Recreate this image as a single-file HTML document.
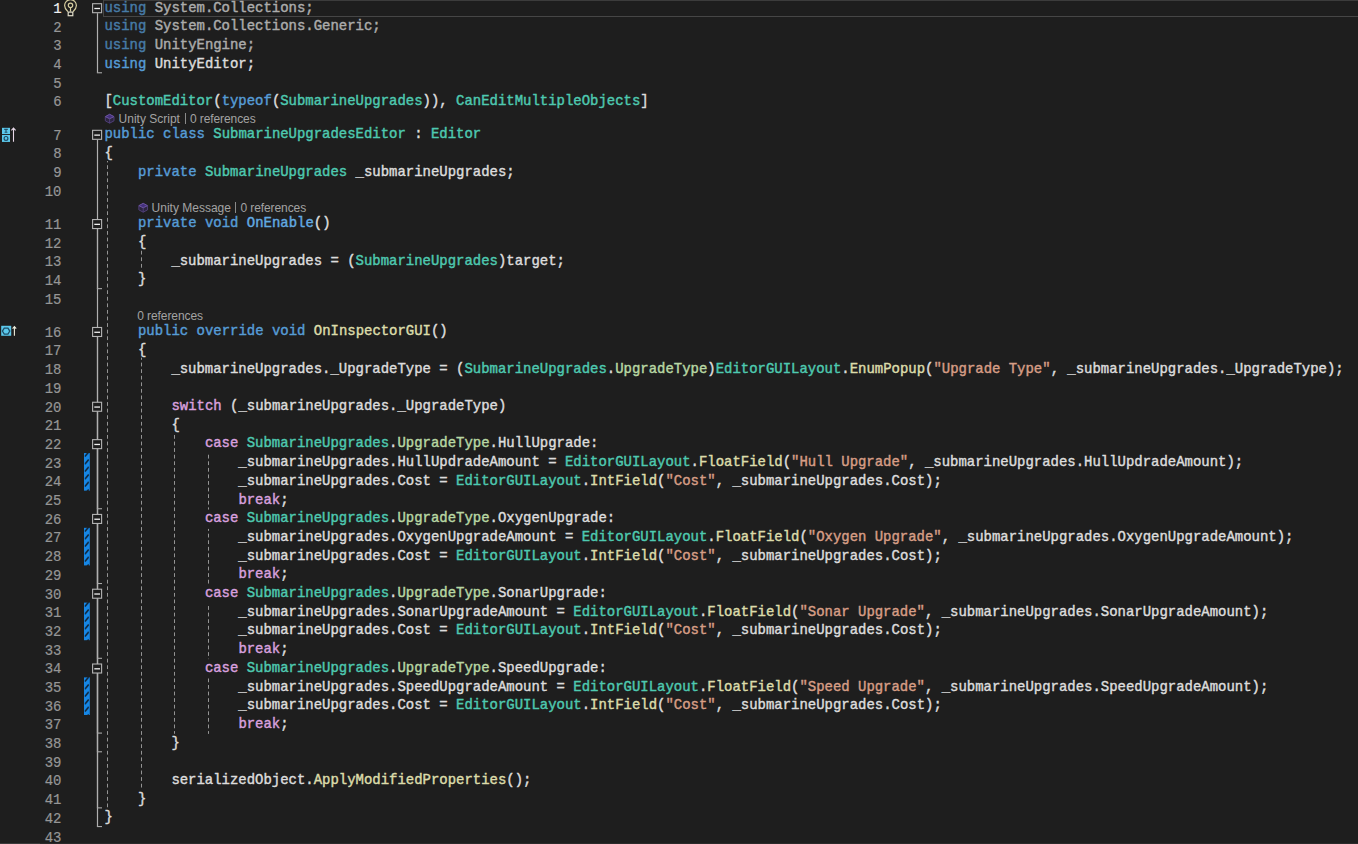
<!DOCTYPE html>
<html><head><meta charset="utf-8"><style>
html,body{margin:0;padding:0;}
body{width:1358px;height:844px;overflow:hidden;background:#1e1e1e;position:relative;}
.ln,.cd{position:absolute;font-family:"Liberation Mono",monospace;font-size:13.965px;line-height:18.70px;height:18.70px;white-space:pre;}
.ln{left:0;width:61.5px;text-align:right;color:#969696;-webkit-text-stroke:0.2px currentColor;}
.cd{left:104.40px;color:#dcdcdc;-webkit-text-stroke:0.42px currentColor;}
i{font-style:normal;}
.k{color:#569cd6}.t{color:#4ec9b0}.m{color:#dcdcaa}.s{color:#d69d85}.c{color:#d8a0df}.e{color:#b8d7a3}.u{color:#62aae2}.dim{opacity:0.74}
.lens{position:absolute;font-family:"Liberation Sans",sans-serif;font-size:12px;color:#a3a3a3;white-space:pre;line-height:14px;}
.abs{position:absolute;}
svg{position:absolute;left:0;top:0;}
</style></head><body>

<div class="abs" style="left:103px;top:0px;width:1255px;height:1px;background:#3c3c3c"></div>
<div class="abs" style="left:103px;top:16px;width:1255px;height:1px;background:#464646"></div>
<div class="abs" style="left:103px;top:0px;width:1px;height:17px;background:#464646"></div>
<div class="abs" style="left:0;top:843px;width:40px;height:1px;background:#3a3a3a"></div>
<div class="abs" style="left:40px;top:843px;width:1318px;height:1px;background:#2a2a2a"></div>
<svg width="1358" height="844" viewBox="0 0 1358 844">
<line x1="107.50" y1="161.01" x2="107.50" y2="808.57" stroke="#949494" stroke-width="1" stroke-dasharray="3.80 2.78" stroke-dashoffset="2.39"/>
<line x1="141.50" y1="249.74" x2="141.50" y2="270.64" stroke="#949494" stroke-width="1" stroke-dasharray="3.80 2.78" stroke-dashoffset="5.58"/>
<line x1="141.50" y1="357.67" x2="141.50" y2="789.88" stroke="#949494" stroke-width="1" stroke-dasharray="3.80 2.78" stroke-dashoffset="1.65"/>
<line x1="174.50" y1="432.45" x2="174.50" y2="733.79" stroke="#949494" stroke-width="1" stroke-dasharray="3.80 2.78" stroke-dashoffset="4.05"/>
<line x1="208.50" y1="454.15" x2="208.50" y2="509.54" stroke="#949494" stroke-width="1" stroke-dasharray="3.80 2.78" stroke-dashoffset="6.01"/>
<line x1="208.50" y1="528.93" x2="208.50" y2="584.32" stroke="#949494" stroke-width="1" stroke-dasharray="3.80 2.78" stroke-dashoffset="1.83"/>
<line x1="208.50" y1="603.72" x2="208.50" y2="659.11" stroke="#949494" stroke-width="1" stroke-dasharray="3.80 2.78" stroke-dashoffset="4.24"/>
<line x1="208.50" y1="678.50" x2="208.50" y2="733.89" stroke="#949494" stroke-width="1" stroke-dasharray="3.80 2.78" stroke-dashoffset="0.06"/>
<line x1="97.50" y1="13.20" x2="97.50" y2="72.78" stroke="#b0b0b0" stroke-width="1.2"/>
<line x1="96.90" y1="72.78" x2="102" y2="72.78" stroke="#a8a8a8" stroke-width="1.1"/>
<line x1="97.50" y1="139.82" x2="97.50" y2="826.57" stroke="#b0b0b0" stroke-width="1.2"/>
<line x1="96.90" y1="826.57" x2="102" y2="826.57" stroke="#a8a8a8" stroke-width="1.1"/>
<line x1="97.50" y1="229.05" x2="97.50" y2="288.64" stroke="#b0b0b0" stroke-width="1.2"/>
<line x1="96.90" y1="288.64" x2="102" y2="288.64" stroke="#a8a8a8" stroke-width="1.1"/>
<line x1="97.50" y1="336.98" x2="97.50" y2="807.87" stroke="#b0b0b0" stroke-width="1.2"/>
<line x1="96.90" y1="807.87" x2="102" y2="807.87" stroke="#a8a8a8" stroke-width="1.1"/>
<line x1="97.50" y1="411.76" x2="97.50" y2="751.79" stroke="#b0b0b0" stroke-width="1.2"/>
<line x1="96.90" y1="751.79" x2="102" y2="751.79" stroke="#a8a8a8" stroke-width="1.1"/>
<line x1="97.50" y1="449.15" x2="97.50" y2="508.74" stroke="#b0b0b0" stroke-width="1.2"/>
<line x1="96.90" y1="508.74" x2="102" y2="508.74" stroke="#a8a8a8" stroke-width="1.1"/>
<line x1="97.50" y1="523.94" x2="97.50" y2="583.52" stroke="#b0b0b0" stroke-width="1.2"/>
<line x1="96.90" y1="583.52" x2="102" y2="583.52" stroke="#a8a8a8" stroke-width="1.1"/>
<line x1="97.50" y1="598.72" x2="97.50" y2="658.31" stroke="#b0b0b0" stroke-width="1.2"/>
<line x1="96.90" y1="658.31" x2="102" y2="658.31" stroke="#a8a8a8" stroke-width="1.1"/>
<line x1="97.50" y1="673.51" x2="97.50" y2="733.09" stroke="#b0b0b0" stroke-width="1.2"/>
<line x1="96.90" y1="733.09" x2="102" y2="733.09" stroke="#a8a8a8" stroke-width="1.1"/>
<rect x="92.6" y="3.70" width="9" height="9" fill="#1e1e1e" stroke="#b4b4b4" stroke-width="1.1"/>
<line x1="94.3" y1="8.50" x2="100.0" y2="8.50" stroke="#f0f0f0" stroke-width="1.3"/>
<rect x="92.6" y="130.32" width="9" height="9" fill="#1e1e1e" stroke="#b4b4b4" stroke-width="1.1"/>
<line x1="94.3" y1="135.12" x2="100.0" y2="135.12" stroke="#f0f0f0" stroke-width="1.3"/>
<rect x="92.6" y="219.55" width="9" height="9" fill="#1e1e1e" stroke="#b4b4b4" stroke-width="1.1"/>
<line x1="94.3" y1="224.35" x2="100.0" y2="224.35" stroke="#f0f0f0" stroke-width="1.3"/>
<rect x="92.6" y="327.48" width="9" height="9" fill="#1e1e1e" stroke="#b4b4b4" stroke-width="1.1"/>
<line x1="94.3" y1="332.28" x2="100.0" y2="332.28" stroke="#f0f0f0" stroke-width="1.3"/>
<rect x="92.6" y="402.26" width="9" height="9" fill="#1e1e1e" stroke="#b4b4b4" stroke-width="1.1"/>
<line x1="94.3" y1="407.06" x2="100.0" y2="407.06" stroke="#f0f0f0" stroke-width="1.3"/>
<rect x="92.6" y="439.65" width="9" height="9" fill="#1e1e1e" stroke="#b4b4b4" stroke-width="1.1"/>
<line x1="94.3" y1="444.45" x2="100.0" y2="444.45" stroke="#f0f0f0" stroke-width="1.3"/>
<rect x="92.6" y="514.44" width="9" height="9" fill="#1e1e1e" stroke="#b4b4b4" stroke-width="1.1"/>
<line x1="94.3" y1="519.24" x2="100.0" y2="519.24" stroke="#f0f0f0" stroke-width="1.3"/>
<rect x="92.6" y="589.22" width="9" height="9" fill="#1e1e1e" stroke="#b4b4b4" stroke-width="1.1"/>
<line x1="94.3" y1="594.02" x2="100.0" y2="594.02" stroke="#f0f0f0" stroke-width="1.3"/>
<rect x="92.6" y="664.01" width="9" height="9" fill="#1e1e1e" stroke="#b4b4b4" stroke-width="1.1"/>
<line x1="94.3" y1="668.81" x2="100.0" y2="668.81" stroke="#f0f0f0" stroke-width="1.3"/>
<defs><pattern id="st" patternUnits="userSpaceOnUse" width="6" height="7.5" patternTransform="translate(84 0.5)"><rect width="6" height="7.5" fill="#1687e6"/><line x1="1.3" y1="5.6" x2="4.3" y2="2.0" stroke="#0e2236" stroke-width="1.5" stroke-linecap="round"/></pattern></defs>
<rect x="84" y="453.05" width="5.8" height="37.59" fill="url(#st)"/>
<rect x="84" y="527.83" width="5.8" height="37.59" fill="url(#st)"/>
<rect x="84" y="602.62" width="5.8" height="37.59" fill="url(#st)"/>
<rect x="84" y="677.40" width="5.8" height="37.59" fill="url(#st)"/>
<g fill="none" stroke="#d6cea0" stroke-width="1.2"><path d="M67.9 11.6 C66.4 10.2 64.6 8.6 64.6 5.6 C64.6 2.2 67.3 -0.4 70.5 -0.4 C73.7 -0.4 76.4 2.2 76.4 5.6 C76.4 8.6 74.6 10.2 73.1 11.6"/><circle cx="70.5" cy="5.3" r="2.2"/><line x1="70.5" y1="7.5" x2="70.5" y2="11.6"/><rect x="68.2" y="12.1" width="4.6" height="3.6" stroke="#e0dcc8"/></g>
<rect x="2" y="127.82" width="8" height="6.2" fill="#5cc9ec"/>
<rect x="2" y="134.92" width="8" height="7" fill="#5cc9ec"/>
<path d="M4.2 129.42 h3.6 M4.6 132.22 h2.8 M6 129.62 v2.6" stroke="#23506a" stroke-width="1.1"/>
<circle cx="6" cy="138.42" r="1.9" fill="none" stroke="#1f4d66" stroke-width="1.2"/>
<path d="M13.5 141.82 V128.22 M11.4 130.42 L13.5 128.02 L15.6 130.42" fill="none" stroke="#e8d8e8" stroke-width="1.1"/>
<rect x="1.2" y="325.78" width="10" height="10" fill="#5cc9ec"/>
<path d="M2.4 331.08 L4.25 328.08 H7.95 L9.8 331.08 L7.95 334.08 H4.25 Z" fill="none" stroke="#1f4d66" stroke-width="1.3"/>
<path d="M14.4 335.78 V326.58 M12.6 328.58 L14.4 326.58 L16.2 328.58" fill="none" stroke="#eeeedd" stroke-width="1.1"/>
<g stroke-linejoin="round"><path d="M109.65 114.27 L114.00 116.62 L114.00 120.82 L109.65 123.17 L105.30 120.82 L105.30 116.62 Z" fill="#2c2540" stroke="none"/><path d="M109.65 114.27 L114.00 116.62 L109.65 118.72 L105.30 116.62 Z" fill="#43307c" stroke="#6e56a2" stroke-width="1.0"/><path d="M105.30 116.62 V120.82 L109.65 123.17 L114.00 120.82 V116.62 M109.65 118.72 V123.17" fill="none" stroke="#54427e" stroke-width="0.9"/></g>
<g stroke-linejoin="round"><path d="M143.20 203.30 L147.55 205.65 L147.55 209.85 L143.20 212.20 L138.85 209.85 L138.85 205.65 Z" fill="#2c2540" stroke="none"/><path d="M143.20 203.30 L147.55 205.65 L143.20 207.75 L138.85 205.65 Z" fill="#43307c" stroke="#6e56a2" stroke-width="1.0"/><path d="M138.85 205.65 V209.85 L143.20 212.20 L147.55 209.85 V205.65 M143.20 207.75 V212.20" fill="none" stroke="#54427e" stroke-width="0.9"/></g>
</svg>
<div class="ln" style="top:0.00px;color:#f0f0f0">1</div>
<div class="cd dim" style="top:-1.50px"><i class="k">using</i> System.Collections;</div>
<div class="ln" style="top:18.70px;color:#969696">2</div>
<div class="cd dim" style="top:17.20px"><i class="k">using</i> System.Collections.Generic;</div>
<div class="ln" style="top:37.39px;color:#969696">3</div>
<div class="cd dim" style="top:35.89px"><i class="k">using</i> UnityEngine;</div>
<div class="ln" style="top:56.09px;color:#969696">4</div>
<div class="cd" style="top:54.59px"><i class="k">using</i> UnityEditor;</div>
<div class="ln" style="top:74.78px;color:#969696">5</div>
<div class="ln" style="top:93.48px;color:#969696">6</div>
<div class="cd" style="top:91.98px">[<i class="t">CustomEditor</i>(<i class="k">typeof</i>(<i class="t">SubmarineUpgrades</i>)), <i class="t">CanEditMultipleObjects</i>]</div>
<div class="ln" style="top:126.62px;color:#969696">7</div>
<div class="cd" style="top:125.12px"><i class="k">public</i> <i class="k">class</i> <i class="t">SubmarineUpgradesEditor</i> : <i class="t">Editor</i></div>
<div class="ln" style="top:145.32px;color:#969696">8</div>
<div class="cd" style="top:143.82px">{</div>
<div class="ln" style="top:164.01px;color:#969696">9</div>
<div class="cd" style="top:162.51px">    <i class="k">private</i> <i class="t">SubmarineUpgrades</i> _submarineUpgrades;</div>
<div class="ln" style="top:182.71px;color:#969696">10</div>
<div class="ln" style="top:215.85px;color:#969696">11</div>
<div class="cd" style="top:214.35px">    <i class="k">private</i> <i class="k">void</i> <i class="u">OnEnable</i>()</div>
<div class="ln" style="top:234.55px;color:#969696">12</div>
<div class="cd" style="top:233.05px">    {</div>
<div class="ln" style="top:253.24px;color:#969696">13</div>
<div class="cd" style="top:251.74px">        _submarineUpgrades = (<i class="t">SubmarineUpgrades</i>)target;</div>
<div class="ln" style="top:271.94px;color:#969696">14</div>
<div class="cd" style="top:270.44px">    }</div>
<div class="ln" style="top:290.64px;color:#969696">15</div>
<div class="ln" style="top:323.78px;color:#969696">16</div>
<div class="cd" style="top:322.28px">    <i class="k">public</i> <i class="k">override</i> <i class="k">void</i> <i class="m">OnInspectorGUI</i>()</div>
<div class="ln" style="top:342.47px;color:#969696">17</div>
<div class="cd" style="top:340.97px">    {</div>
<div class="ln" style="top:361.17px;color:#969696">18</div>
<div class="cd" style="top:359.67px">        _submarineUpgrades._UpgradeType = (<i class="t">SubmarineUpgrades</i>.<i class="e">UpgradeType</i>)<i class="t">EditorGUILayout</i>.<i class="m">EnumPopup</i>(<i class="s">&quot;Upgrade Type&quot;</i>, _submarineUpgrades._UpgradeType);</div>
<div class="ln" style="top:379.87px;color:#969696">19</div>
<div class="ln" style="top:398.56px;color:#969696">20</div>
<div class="cd" style="top:397.06px">        <i class="c">switch</i> (_submarineUpgrades._UpgradeType)</div>
<div class="ln" style="top:417.26px;color:#969696">21</div>
<div class="cd" style="top:415.76px">        {</div>
<div class="ln" style="top:435.95px;color:#969696">22</div>
<div class="cd" style="top:434.45px">            <i class="c">case</i> <i class="t">SubmarineUpgrades</i>.<i class="e">UpgradeType</i>.HullUpgrade:</div>
<div class="ln" style="top:454.65px;color:#969696">23</div>
<div class="cd" style="top:453.15px">                _submarineUpgrades.HullUpdradeAmount = <i class="t">EditorGUILayout</i>.<i class="m">FloatField</i>(<i class="s">&quot;Hull Upgrade&quot;</i>, _submarineUpgrades.HullUpdradeAmount);</div>
<div class="ln" style="top:473.35px;color:#969696">24</div>
<div class="cd" style="top:471.85px">                _submarineUpgrades.Cost = <i class="t">EditorGUILayout</i>.<i class="m">IntField</i>(<i class="s">&quot;Cost&quot;</i>, _submarineUpgrades.Cost);</div>
<div class="ln" style="top:492.04px;color:#969696">25</div>
<div class="cd" style="top:490.54px">                <i class="c">break</i>;</div>
<div class="ln" style="top:510.74px;color:#969696">26</div>
<div class="cd" style="top:509.24px">            <i class="c">case</i> <i class="t">SubmarineUpgrades</i>.<i class="e">UpgradeType</i>.OxygenUpgrade:</div>
<div class="ln" style="top:529.43px;color:#969696">27</div>
<div class="cd" style="top:527.93px">                _submarineUpgrades.OxygenUpgradeAmount = <i class="t">EditorGUILayout</i>.<i class="m">FloatField</i>(<i class="s">&quot;Oxygen Upgrade&quot;</i>, _submarineUpgrades.OxygenUpgradeAmount);</div>
<div class="ln" style="top:548.13px;color:#969696">28</div>
<div class="cd" style="top:546.63px">                _submarineUpgrades.Cost = <i class="t">EditorGUILayout</i>.<i class="m">IntField</i>(<i class="s">&quot;Cost&quot;</i>, _submarineUpgrades.Cost);</div>
<div class="ln" style="top:566.83px;color:#969696">29</div>
<div class="cd" style="top:565.33px">                <i class="c">break</i>;</div>
<div class="ln" style="top:585.52px;color:#969696">30</div>
<div class="cd" style="top:584.02px">            <i class="c">case</i> <i class="t">SubmarineUpgrades</i>.<i class="e">UpgradeType</i>.SonarUpgrade:</div>
<div class="ln" style="top:604.22px;color:#969696">31</div>
<div class="cd" style="top:602.72px">                _submarineUpgrades.SonarUpgradeAmount = <i class="t">EditorGUILayout</i>.<i class="m">FloatField</i>(<i class="s">&quot;Sonar Upgrade&quot;</i>, _submarineUpgrades.SonarUpgradeAmount);</div>
<div class="ln" style="top:622.91px;color:#969696">32</div>
<div class="cd" style="top:621.41px">                _submarineUpgrades.Cost = <i class="t">EditorGUILayout</i>.<i class="m">IntField</i>(<i class="s">&quot;Cost&quot;</i>, _submarineUpgrades.Cost);</div>
<div class="ln" style="top:641.61px;color:#969696">33</div>
<div class="cd" style="top:640.11px">                <i class="c">break</i>;</div>
<div class="ln" style="top:660.31px;color:#969696">34</div>
<div class="cd" style="top:658.81px">            <i class="c">case</i> <i class="t">SubmarineUpgrades</i>.<i class="e">UpgradeType</i>.SpeedUpgrade:</div>
<div class="ln" style="top:679.00px;color:#969696">35</div>
<div class="cd" style="top:677.50px">                _submarineUpgrades.SpeedUpgradeAmount = <i class="t">EditorGUILayout</i>.<i class="m">FloatField</i>(<i class="s">&quot;Speed Upgrade&quot;</i>, _submarineUpgrades.SpeedUpgradeAmount);</div>
<div class="ln" style="top:697.70px;color:#969696">36</div>
<div class="cd" style="top:696.20px">                _submarineUpgrades.Cost = <i class="t">EditorGUILayout</i>.<i class="m">IntField</i>(<i class="s">&quot;Cost&quot;</i>, _submarineUpgrades.Cost);</div>
<div class="ln" style="top:716.39px;color:#969696">37</div>
<div class="cd" style="top:714.89px">                <i class="c">break</i>;</div>
<div class="ln" style="top:735.09px;color:#969696">38</div>
<div class="cd" style="top:733.59px">        }</div>
<div class="ln" style="top:753.79px;color:#969696">39</div>
<div class="ln" style="top:772.48px;color:#969696">40</div>
<div class="cd" style="top:770.98px">        serializedObject.<i class="m">ApplyModifiedProperties</i>();</div>
<div class="ln" style="top:791.18px;color:#969696">41</div>
<div class="cd" style="top:789.68px">    }</div>
<div class="ln" style="top:809.87px;color:#969696">42</div>
<div class="cd" style="top:808.37px">}</div>
<div class="ln" style="top:828.57px;color:#969696">43</div>
<div class="lens" style="left:118.60px;top:111.62px">Unity Script</div>
<div class="abs" style="left:184.50px;top:113.12px;width:1px;height:11px;background:#8a8a8a"></div>
<div class="lens" style="left:189.90px;top:111.62px;letter-spacing:-0.08px">0 references</div>
<div class="lens" style="left:151.60px;top:200.85px">Unity Message</div>
<div class="abs" style="left:234.50px;top:202.35px;width:1px;height:11px;background:#8a8a8a"></div>
<div class="lens" style="left:240.40px;top:200.85px;letter-spacing:-0.08px">0 references</div>
<div class="lens" style="left:137.20px;top:308.78px;letter-spacing:-0.08px">0 references</div>
</body></html>
